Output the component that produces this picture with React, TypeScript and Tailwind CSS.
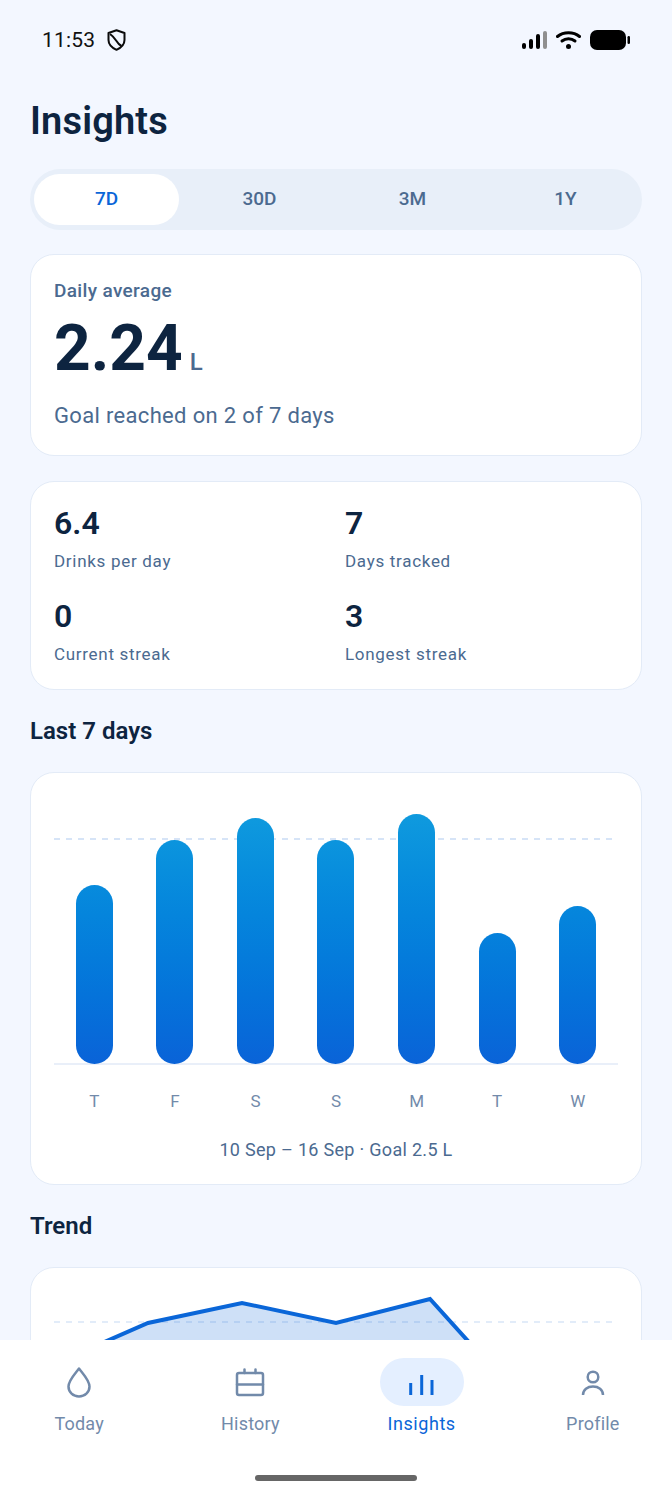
import React from "react";

const bars = [179, 224, 246, 224, 250, 131, 158];
const days = ["T", "F", "S", "S", "M", "T", "W"];

function Shield() {
  return (
    <svg width="19" height="22" viewBox="0 0 19 22" fill="none" stroke="#0b0b0b" strokeWidth="2" strokeLinejoin="round">
      <path d="M9.500 1.200 17.500 4V11C17.500 15.500 14 18.800 9.500 20.800C5 18.800 1.500 15.500 1.500 11V4Z" />
      <path d="M3 5C6 7 7.500 9 9.500 12C11 14.500 12.500 16 14.500 17" />
    </svg>
  );
}

function StatusIcons() {
  return (
    <div className="flex items-center">
      <svg width="26" height="20" viewBox="0 0 26 20" fill="#000">
        <rect x="0" y="13" width="4" height="6" rx="2" />
        <rect x="7" y="9" width="4" height="10" rx="2" />
        <rect x="14" y="4" width="4" height="15" rx="2" />
        <rect x="21" y="1" width="4" height="18" rx="2" fill="#8f8f8f" />
      </svg>
      <svg className="ml-2" width="25" height="20" viewBox="0 0 25 20" fill="none" stroke="#000" strokeWidth="3" strokeLinecap="round">
        <path d="M1.500 6.500C7.500 1.500 17.500 1.500 23.500 6.500" />
        <path d="M6 11C9.800 8 15.200 8 19 11" />
        <circle cx="12.500" cy="16.500" r="2.500" fill="#000" stroke="none" />
      </svg>
      <svg className="ml-[9px]" width="40" height="20" viewBox="0 0 40 20" fill="#000">
        <rect x="0" y="0" width="36" height="20" rx="7" />
        <rect x="37.500" y="6" width="2.500" height="8" rx="1.200" />
      </svg>
    </div>
  );
}

function Stat({ value, label }: { value: string; label: string }) {
  return (
    <div className="flex flex-col">
      <div className="text-[32px] leading-[38px] font-semibold text-[#0d2440]">{value}</div>
      <div className="mt-[7px] text-[17px] leading-[24px] tracking-[0.7px] text-[#4b6a90]">{label}</div>
    </div>
  );
}

function Drop() {
  return (
    <svg width="26" height="32" viewBox="0 0 26 32" fill="none" stroke="#728aaa" strokeWidth="2.500" strokeLinejoin="round">
      <path d="M13 2.500C8 9 2.500 14.500 2.500 20.500C2.500 26.300 7.200 30.500 13 30.500C18.800 30.500 23.500 26.300 23.500 20.500C23.500 14.500 18 9 13 2.500Z" />
    </svg>
  );
}

function Calendar() {
  return (
    <svg width="30" height="30" viewBox="0 0 30 30" fill="none" stroke="#728aaa" strokeWidth="2.500" strokeLinecap="round" strokeLinejoin="round">
      <rect x="2" y="6" width="26" height="22" rx="2" />
      <path d="M2 17.500H28M9.500 2.500V6M20.500 2.500V6" />
    </svg>
  );
}

function BarsIcon() {
  return (
    <svg width="26" height="30" viewBox="0 0 26 30" fill="none" stroke="#0a66d8" strokeWidth="3">
      <path d="M1.700 16V28M12.700 8V28M23 13V28" />
    </svg>
  );
}

function Person() {
  return (
    <svg width="26" height="28" viewBox="0 0 26 28" fill="none" stroke="#728aaa" strokeWidth="2.500">
      <circle cx="13" cy="9" r="5.300" />
      <path d="M3 27C3 21.500 7.500 18.500 13 18.500C18.500 18.500 23 21.500 23 27" />
    </svg>
  );
}

function NavItem({ label, active, icon }: { label: string; active?: boolean; icon: React.ReactNode }) {
  return (
    <div className="flex flex-col items-center">
      <div className={`flex h-12 w-[84px] items-center justify-center rounded-full ${active ? "bg-[#e4efff]" : ""}`}>{icon}</div>
      <div className={`mt-[6px] text-[18px] leading-6 ${active ? "tracking-[0.55px] text-[#0a66d8]" : "tracking-[0.2px] text-[#728aaa]"}`}>{label}</div>
    </div>
  );
}

export default function App() {
  return (
    <div className="flex h-[1496px] w-[672px] flex-col overflow-hidden bg-[#f3f7ff] font-['Roboto',sans-serif]">
      <div className="min-h-0 flex-1 overflow-hidden">
        <div className="flex h-[80px] items-center justify-between pl-[42px] pr-[42px]">
          <div className="flex items-center gap-[12px]">
            <span className="text-[21px] leading-6 tracking-[0.2px] text-[#111]">11:53</span>
            <Shield />
          </div>
          <StatusIcons />
        </div>
        <div className="px-[30px]">
          <h1 className="mt-[16px] text-[38px] leading-[50px] tracking-[0.15px] font-semibold text-[#0d2440]">Insights</h1>
          <div className="mt-[23px] grid h-[61px] grid-cols-4 gap-2 rounded-full bg-[#e8eff9] p-1 py-[5px]">
            {["7D", "30D", "3M", "1Y"].map((t, i) => (
              <div
                key={t}
                className={`flex items-center justify-center rounded-full text-[19px] font-medium ${i === 0 ? "bg-white text-[#0a66d8]" : "text-[#4b6a90]"}`}
              >
                {t}
              </div>
            ))}
          </div>

          <div className="mt-6 h-[202px] rounded-[24px] border border-[#e3ebf7] bg-white px-[23px] pt-6">
            <div className="text-[19px] leading-6 tracking-[0.35px] font-medium text-[#4b6a90]">Daily average</div>
            <div className="mt-2 flex items-baseline gap-[7px]">
              <span className="text-[64px] leading-[76px] font-bold text-[#0d2440]">2.24</span>
              <span className="text-[24px] font-medium text-[#4b6a90]">L</span>
            </div>
            <div className="mt-[14px] text-[22px] leading-[30px] tracking-[0.33px] text-[#4b6a90]">Goal reached on 2 of 7 days</div>
          </div>

          <div className="mt-[25px] grid h-[209px] grid-cols-2 content-start gap-x-[18px] gap-y-6 rounded-[24px] border border-[#e3ebf7] bg-white px-[23px] pt-[22px]">
            <Stat value="6.4" label="Drinks per day" />
            <Stat value="7" label="Days tracked" />
            <Stat value="0" label="Current streak" />
            <Stat value="3" label="Longest streak" />
          </div>

          <h2 className="mt-[26px] text-[24px] leading-[30px] font-semibold text-[#0d2440]">Last 7 days</h2>

          <div className="mt-[26px] h-[413px] rounded-[24px] border border-[#e3ebf7] bg-white px-[23px] pt-[41px]">
            <div className="relative h-[250px]">
              <svg className="absolute left-0 top-[24px] h-[2px] w-full" height="2">
                <line x1="0" y1="1" x2="100%" y2="1" stroke="#d6e4f7" strokeWidth="2" strokeDasharray="6 6" />
              </svg>
              <div className="absolute bottom-[-1px] left-0 h-[2px] w-full bg-[#e9eff9]" />
              <div className="relative grid h-full grid-cols-7 items-end">
                {bars.map((h, i) => (
                  <div key={i} className="flex justify-center">
                    <div
                      className="w-[37px] rounded-[18.5px] bg-gradient-to-b from-[#0f9ade] to-[#0a63d8] bg-[length:100%_250px] bg-bottom bg-no-repeat"
                      style={{ height: h }}
                    />
                  </div>
                ))}
              </div>
            </div>
            <div className="mt-[25px] grid grid-cols-7">
              {days.map((d, i) => (
                <div key={i} className="text-center text-[17px] leading-6 text-[#728aaa]">{d}</div>
              ))}
            </div>
            <div className="mt-[24px] text-center text-[18px] leading-[26px] tracking-[0.3px] text-[#4b6a90]">10 Sep – 16 Sep · Goal 2.5 L</div>
          </div>

          <h2 className="mt-[26px] text-[24px] leading-[30px] font-semibold text-[#0d2440]">Trend</h2>

          <div className="relative mt-[26px] h-[300px] rounded-[24px] border border-[#e3ebf7] bg-white">
            <svg className="absolute left-0 top-0" width="610" height="200" viewBox="0 0 610 200" fill="none">
              <path d="M23 54H587" stroke="#d6e4f7" strokeWidth="2" strokeDasharray="6 6" opacity="0.7" />
              <path d="M23 96L117 55L211 35L305 55L399 31L493 135V200H23Z" fill="#0a66d8" fillOpacity="0.2" />
              <path d="M23 96L117 55L211 35L305 55L399 31L493 135" stroke="#0a66d8" strokeWidth="4" strokeLinejoin="miter" />
            </svg>
          </div>
        </div>
      </div>

      <div className="relative z-10 h-[156px] shrink-0 bg-white pt-[18px]">
        <div className="grid grid-cols-4 gap-x-[29px] px-2">
          <NavItem label="Today" icon={<Drop />} />
          <NavItem label="History" icon={<Calendar />} />
          <NavItem label="Insights" active icon={<BarsIcon />} />
          <NavItem label="Profile" icon={<Person />} />
        </div>
        <div className="absolute bottom-[15px] left-[255px] h-[6px] w-[162px] rounded-full bg-[#666]" />
      </div>
    </div>
  );
}
